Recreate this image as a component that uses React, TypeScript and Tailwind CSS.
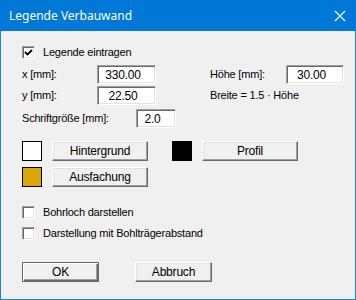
import React from 'react';

const font = { fontFamily: '"Liberation Sans", Arial, sans-serif' };

const Field: React.FC<{ value: string; width: string }> = ({ value, width }) => (
  <div
    className={`${width} h-[19px] bg-white border border-t-[#a0a0a0] border-l-[#a0a0a0] border-b-white border-r-white shadow-[inset_1px_1px_0_#696969,inset_-1px_-1px_0_#e3e3e3] flex items-center justify-center pr-[7px] text-[12px] leading-none`}
  >
    {value}
  </div>
);

const Button: React.FC<{ label: string; width: string; isDefault?: boolean }> = ({ label, width, isDefault }) => (
  <div
    className={`${width} h-[20px] bg-[#f0f0f0] flex items-center justify-center text-[12px] leading-none ${
      isDefault
        ? 'border border-[#696969] shadow-[inset_1px_1px_0_#ffffff,inset_-1px_-1px_0_#696969,inset_-2px_-2px_0_#a0a0a0]'
        : 'border border-t-white border-l-white border-b-[#696969] border-r-[#696969] shadow-[inset_-1px_-1px_0_#a0a0a0,inset_1px_1px_0_#e3e3e3]'
    }`}
  >
    {label}
  </div>
);

const CheckBox: React.FC<{ checked?: boolean; label: string }> = ({ checked, label }) => (
  <div className="h-[19px] flex items-center">
    <div className="w-[13px] h-[13px] bg-white border border-t-[#a0a0a0] border-l-[#a0a0a0] border-b-white border-r-white shadow-[inset_1px_1px_0_#696969,inset_-1px_-1px_0_#e3e3e3] flex items-center justify-center">
      {checked && (
        <svg width="11" height="11" viewBox="0 0 11 11">
          <path d="M2 5 L4.5 7.5 L9 3" fill="none" stroke="#000" strokeWidth="1.8" />
        </svg>
      )}
    </div>
    <span className="ml-[8px]">{label}</span>
  </div>
);

const App: React.FC = () => {
  return (
    <div
      className="w-[356px] h-[300px] bg-[#f0f0f0] border border-[#1883d7] border-t-0 flex flex-col text-black text-[11px] tracking-[-0.2px]"
      style={font}
    >
      {/* Title bar */}
      <div className="h-[31px] bg-[#0078d7] flex items-center justify-between pl-[9px] pr-[9px] -mx-px">
        <span className="text-white text-[12px] tracking-normal" style={{ fontFamily: '"Noto Sans", "Open Sans", sans-serif' }}>
          Legende Verbauwand
        </span>
        <svg width="12" height="12" viewBox="0 0 12 12" className="mr-[1px]">
          <path d="M1 1 L11 11 M11 1 L1 11" stroke="#fff" strokeWidth="1.1" />
        </svg>
      </div>

      <div className="flex flex-col pl-[21px]">
        <div className="mt-[12px]">
          <CheckBox checked label="Legende eintragen" />
        </div>

        <div className="mt-[3px] h-[19px] flex items-center">
          <span className="w-[75px]">x [mm]:</span>
          <Field value="330.00" width="w-[59px]" />
          <span className="ml-[54px] w-[76px]">Höhe [mm]:</span>
          <Field value="30.00" width="w-[58px]" />
        </div>

        <div className="mt-[2px] h-[19px] flex items-center">
          <span className="w-[75px]">y [mm]:</span>
          <Field value="22.50" width="w-[59px]" />
          <span className="ml-[54px]">Breite = 1.5 · Höhe</span>
        </div>

        <div className="mt-[4px] h-[19px] flex items-center">
          <span className="w-[114px]">Schriftgröße [mm]:</span>
          <Field value="2.0" width="w-[40px]" />
        </div>

        <div className="mt-[12px] h-[21px] flex items-center">
          <div className="w-[20px] h-[20px] bg-white border border-black" />
          <div className="ml-[10px]">
            <Button label="Hintergrund" width="w-[96px]" />
          </div>
          <div className="ml-[24px] w-[20px] h-[20px] bg-black border border-black" />
          <div className="ml-[10px]">
            <Button label="Profil" width="w-[96px]" />
          </div>
        </div>

        <div className="mt-[5px] h-[21px] flex items-center">
          <div className="w-[20px] h-[20px] bg-[#daa600] border border-black" />
          <div className="ml-[10px]">
            <Button label="Ausfachung" width="w-[96px]" />
          </div>
        </div>

        <div className="mt-[16px]">
          <CheckBox label="Bohrloch darstellen" />
        </div>
        <div className="mt-[2px]">
          <CheckBox label="Darstellung mit Bohlträgerabstand" />
        </div>

        <div className="mt-[19px] flex">
          <Button label="OK" width="w-[77px]" isDefault />
          <div className="ml-[36px]">
            <Button label="Abbruch" width="w-[77px]" />
          </div>
        </div>
      </div>
    </div>
  );
};

export default App;
